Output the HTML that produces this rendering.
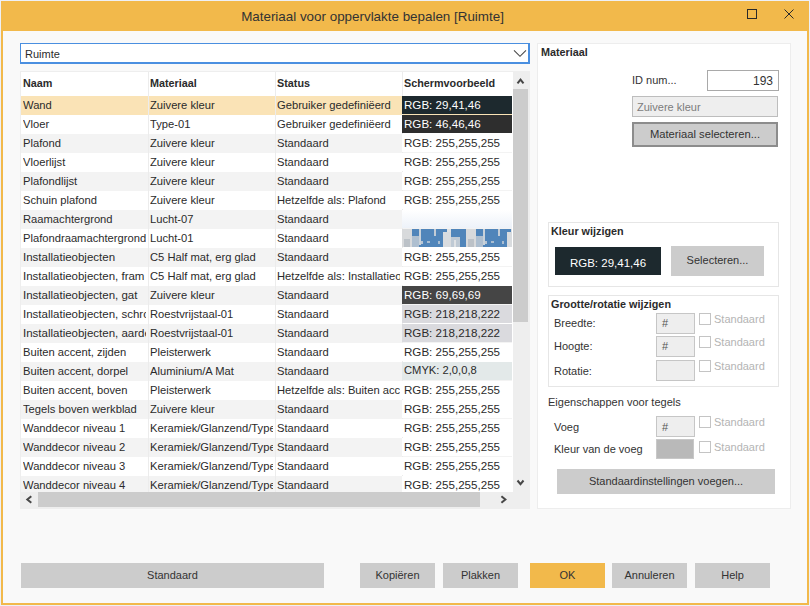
<!DOCTYPE html>
<html><head><meta charset="utf-8"><title>Materiaal voor oppervlakte bepalen</title>
<style>
*{margin:0;padding:0;box-sizing:border-box}
html,body{width:810px;height:606px;overflow:hidden;background:#eef0f6;font-family:"Liberation Sans",sans-serif;color:#2b2b2b}
.a{position:absolute}
.t{position:absolute;white-space:nowrap;overflow:hidden}
#win{position:absolute;left:1px;top:1px;width:808px;height:604px;background:#f2b94b}
#content{position:absolute;left:3px;top:31px;width:804px;height:572px;background:#f9f9f9}
.btn{position:absolute;background:#cccccc;font-size:11px;text-align:center;color:#333}
.cell{position:absolute;white-space:nowrap;overflow:hidden;font-size:11.2px;line-height:19px}
.sw{font-size:11.6px;z-index:2}
svg.a,.z2{z-index:2}
.hdr{position:absolute;white-space:nowrap;overflow:hidden;font-size:10.8px;font-weight:bold;line-height:24px}
.lbl{position:absolute;white-space:nowrap;font-size:11px;color:#333}
.chk{position:absolute;width:12px;height:12px;border:1px solid #c4c4c4;background:#fff}
.std{position:absolute;white-space:nowrap;font-size:11px;color:#b4b4b4}
.inp{position:absolute;background:#eeeeee;border:1px solid #c6c6c6;font-size:11px;color:#555}
</style></head>
<body>
<div id="win"></div>
<div class="t" style="left:1px;top:7px;width:743px;text-align:center;font-size:13.4px;line-height:20px;color:#333">Materiaal voor oppervlakte bepalen [Ruimte]</div>
<svg class="a" style="left:740px;top:2px" width="68" height="26" viewBox="740 2 68 26"><rect x="747.5" y="9.5" width="9" height="9" fill="none" stroke="#2a2a2a" stroke-width="1"/><path d="M784.5 9.5 L793.5 18.5 M793.5 9.5 L784.5 18.5" stroke="#2a2a2a" stroke-width="1" fill="none"/></svg>
<div id="content"></div>
<div class="a" style="left:20px;top:43px;width:510px;height:21px;background:#fff;border-style:solid;border-color:#4a8fe0;border-width:1px 2px 2px 1px"></div>
<div class="t" style="left:25px;top:44px;font-size:11px;line-height:21px;color:#2b2b2b">Ruimte</div>
<svg class="a" style="left:510px;top:44px" width="20" height="18" viewBox="510 44 20 18"><path d="M514 50.3 L520 56.3 L526 50.3" stroke="#4a4a4a" stroke-width="1.1" fill="none"/></svg>
<div class="a" style="left:20px;top:71px;width:510px;height:438px;background:#eeeeee"></div>
<div class="a" style="left:21px;top:72px;width:492px;height:420px;background:#ffffff;overflow:hidden">
<div class="hdr" style="left:2px;top:-1px;width:124px">Naam</div>
<div class="hdr" style="left:129px;top:-1px;width:124px">Materiaal</div>
<div class="hdr" style="left:256px;top:-1px;width:124px">Status</div>
<div class="hdr" style="left:383px;top:-1px;width:108px">Schermvoorbeeld</div>
<div class="a" style="left:0;top:24px;width:491px;height:19px;background:#fae3b6"></div>
<div class="cell" style="left:2px;top:24px;width:123px">Wand</div>
<div class="cell" style="left:129px;top:24px;width:123px">Zuivere kleur</div>
<div class="cell" style="left:256px;top:24px;width:123px">Gebruiker gedefiniëerd</div>
<div class="cell sw" style="left:381px;top:24px;width:110px;height:18px;line-height:17px;background:#1d292e;color:#fff;padding-left:2px">RGB: 29,41,46</div>
<div class="a" style="left:0;top:43px;width:491px;height:19px;background:#ffffff"></div>
<div class="cell" style="left:2px;top:43px;width:123px">Vloer</div>
<div class="cell" style="left:129px;top:43px;width:123px">Type-01</div>
<div class="cell" style="left:256px;top:43px;width:123px">Gebruiker gedefiniëerd</div>
<div class="cell sw" style="left:381px;top:43px;width:110px;height:18px;line-height:17px;background:#2e2e2e;color:#fff;padding-left:2px">RGB: 46,46,46</div>
<div class="a" style="left:0;top:62px;width:491px;height:19px;background:#f3f3f3"></div>
<div class="cell" style="left:2px;top:62px;width:123px">Plafond</div>
<div class="cell" style="left:129px;top:62px;width:123px">Zuivere kleur</div>
<div class="cell" style="left:256px;top:62px;width:123px">Standaard</div>
<div class="cell sw" style="left:381px;top:62px;width:110px;height:18px;line-height:17px;background:#ffffff;color:#2b2b2b;padding-left:2px;">RGB: 255,255,255</div>
<div class="a" style="left:0;top:81px;width:491px;height:19px;background:#ffffff"></div>
<div class="cell" style="left:2px;top:81px;width:123px">Vloerlijst</div>
<div class="cell" style="left:129px;top:81px;width:123px">Zuivere kleur</div>
<div class="cell" style="left:256px;top:81px;width:123px">Standaard</div>
<div class="cell sw" style="left:381px;top:81px;width:110px;height:18px;line-height:17px;background:#ffffff;color:#2b2b2b;padding-left:2px;">RGB: 255,255,255</div>
<div class="a" style="left:0;top:100px;width:491px;height:19px;background:#f3f3f3"></div>
<div class="cell" style="left:2px;top:100px;width:123px">Plafondlijst</div>
<div class="cell" style="left:129px;top:100px;width:123px">Zuivere kleur</div>
<div class="cell" style="left:256px;top:100px;width:123px">Standaard</div>
<div class="cell sw" style="left:381px;top:100px;width:110px;height:18px;line-height:17px;background:#ffffff;color:#2b2b2b;padding-left:2px;">RGB: 255,255,255</div>
<div class="a" style="left:0;top:119px;width:491px;height:19px;background:#ffffff"></div>
<div class="cell" style="left:2px;top:119px;width:123px">Schuin plafond</div>
<div class="cell" style="left:129px;top:119px;width:123px">Zuivere kleur</div>
<div class="cell" style="left:256px;top:119px;width:123px">Hetzelfde als: Plafond</div>
<div class="cell sw" style="left:381px;top:119px;width:110px;height:18px;line-height:17px;background:#ffffff;color:#2b2b2b;padding-left:2px;">RGB: 255,255,255</div>
<div class="a" style="left:0;top:138px;width:491px;height:19px;background:#f3f3f3"></div>
<div class="cell" style="left:2px;top:138px;width:123px">Raamachtergrond</div>
<div class="cell" style="left:129px;top:138px;width:123px">Lucht-07</div>
<div class="cell" style="left:256px;top:138px;width:123px">Standaard</div>
<div class="a z2" style="left:381px;top:138px;width:110px;height:18px;background:linear-gradient(#ffffff,#edf2f9)"></div>
<div class="a" style="left:0;top:157px;width:491px;height:19px;background:#ffffff"></div>
<div class="cell" style="left:2px;top:157px;width:123px">Plafondraamachtergrond</div>
<div class="cell" style="left:129px;top:157px;width:123px">Lucht-01</div>
<div class="cell" style="left:256px;top:157px;width:123px">Standaard</div>
<svg class="a" style="left:381px;top:157px" width="110" height="18"><defs><filter id="bl" x="-10%" y="-10%" width="120%" height="120%"><feGaussianBlur stdDeviation="0.7"/></filter><pattern id="sky" width="64" height="18" patternUnits="userSpaceOnUse"><g><rect width="64" height="18" fill="#5085ba"/><rect x="0" y="0" width="10" height="18" fill="#d8dadc"/><rect x="2" y="10" width="6" height="8" fill="#bcc2c8"/><rect x="10" y="7" width="7" height="11" fill="#aebfd0"/><rect x="17" y="0" width="2" height="16" fill="#c9d2da"/><rect x="19" y="12" width="2" height="3" fill="#b7c6d5"/><rect x="25" y="12" width="3" height="2" fill="#a9bdd1"/><rect x="32" y="0" width="2" height="7" fill="#c3ccd6"/><rect x="36" y="12" width="2" height="3" fill="#a9bdd1"/><rect x="41" y="3" width="8" height="15" fill="#d9dcdf"/><rect x="45" y="0" width="4" height="3" fill="#dfe1e3"/><rect x="49" y="8" width="9" height="10" fill="#bfcad5"/><rect x="52" y="11" width="2" height="7" fill="#dfe2e5"/></g></pattern></defs><rect width="110" height="18" fill="url(#sky)"/></svg>
<div class="a" style="left:0;top:176px;width:491px;height:19px;background:#f3f3f3"></div>
<div class="cell" style="left:2px;top:176px;width:123px;font-size:11.5px">Installatieobjecten</div>
<div class="cell" style="left:129px;top:176px;width:123px">C5 Half mat, erg glad</div>
<div class="cell" style="left:256px;top:176px;width:123px">Standaard</div>
<div class="cell sw" style="left:381px;top:176px;width:110px;height:18px;line-height:17px;background:#ffffff;color:#2b2b2b;padding-left:2px;">RGB: 255,255,255</div>
<div class="a" style="left:0;top:195px;width:491px;height:19px;background:#ffffff"></div>
<div class="cell" style="left:2px;top:195px;width:123px;font-size:11.5px">Installatieobjecten, fram</div>
<div class="cell" style="left:129px;top:195px;width:123px">C5 Half mat, erg glad</div>
<div class="cell" style="left:256px;top:195px;width:123px">Hetzelfde als: Installatieobjecten</div>
<div class="cell sw" style="left:381px;top:195px;width:110px;height:18px;line-height:17px;background:#ffffff;color:#2b2b2b;padding-left:2px;">RGB: 255,255,255</div>
<div class="a" style="left:0;top:214px;width:491px;height:19px;background:#f3f3f3"></div>
<div class="cell" style="left:2px;top:214px;width:123px;font-size:11.5px">Installatieobjecten, gat</div>
<div class="cell" style="left:129px;top:214px;width:123px">Zuivere kleur</div>
<div class="cell" style="left:256px;top:214px;width:123px">Standaard</div>
<div class="cell sw" style="left:381px;top:214px;width:110px;height:18px;line-height:17px;background:#454545;color:#fff;padding-left:2px">RGB: 69,69,69</div>
<div class="a" style="left:0;top:233px;width:491px;height:19px;background:#ffffff"></div>
<div class="cell" style="left:2px;top:233px;width:123px;font-size:11.5px">Installatieobjecten, schroeven</div>
<div class="cell" style="left:129px;top:233px;width:123px">Roestvrijstaal-01</div>
<div class="cell" style="left:256px;top:233px;width:123px">Standaard</div>
<div class="cell sw" style="left:381px;top:233px;width:110px;height:18px;line-height:17px;background:#dadade;color:#2b2b2b;padding-left:2px;">RGB: 218,218,222</div>
<div class="a" style="left:0;top:252px;width:491px;height:19px;background:#f3f3f3"></div>
<div class="cell" style="left:2px;top:252px;width:123px;font-size:11.5px">Installatieobjecten, aarde</div>
<div class="cell" style="left:129px;top:252px;width:123px">Roestvrijstaal-01</div>
<div class="cell" style="left:256px;top:252px;width:123px">Standaard</div>
<div class="cell sw" style="left:381px;top:252px;width:110px;height:18px;line-height:17px;background:#dadade;color:#2b2b2b;padding-left:2px;">RGB: 218,218,222</div>
<div class="a" style="left:0;top:271px;width:491px;height:19px;background:#ffffff"></div>
<div class="cell" style="left:2px;top:271px;width:123px">Buiten accent, zijden</div>
<div class="cell" style="left:129px;top:271px;width:123px">Pleisterwerk</div>
<div class="cell" style="left:256px;top:271px;width:123px">Standaard</div>
<div class="cell sw" style="left:381px;top:271px;width:110px;height:18px;line-height:17px;background:#ffffff;color:#2b2b2b;padding-left:2px;">RGB: 255,255,255</div>
<div class="a" style="left:0;top:290px;width:491px;height:19px;background:#f3f3f3"></div>
<div class="cell" style="left:2px;top:290px;width:123px">Buiten accent, dorpel</div>
<div class="cell" style="left:129px;top:290px;width:123px">Aluminium/A Mat</div>
<div class="cell" style="left:256px;top:290px;width:123px">Standaard</div>
<div class="cell sw" style="left:381px;top:290px;width:110px;height:18px;line-height:17px;background:#e3e9e9;color:#2b2b2b;padding-left:2px;font-size:11.2px">CMYK: 2,0,0,8</div>
<div class="a" style="left:0;top:309px;width:491px;height:19px;background:#ffffff"></div>
<div class="cell" style="left:2px;top:309px;width:123px">Buiten accent, boven</div>
<div class="cell" style="left:129px;top:309px;width:123px">Pleisterwerk</div>
<div class="cell" style="left:256px;top:309px;width:123px">Hetzelfde als: Buiten accent, zijden</div>
<div class="cell sw" style="left:381px;top:309px;width:110px;height:18px;line-height:17px;background:#ffffff;color:#2b2b2b;padding-left:2px;">RGB: 255,255,255</div>
<div class="a" style="left:0;top:328px;width:491px;height:19px;background:#f3f3f3"></div>
<div class="cell" style="left:2px;top:328px;width:123px">Tegels boven werkblad</div>
<div class="cell" style="left:129px;top:328px;width:123px">Zuivere kleur</div>
<div class="cell" style="left:256px;top:328px;width:123px">Standaard</div>
<div class="cell sw" style="left:381px;top:328px;width:110px;height:18px;line-height:17px;background:#ffffff;color:#2b2b2b;padding-left:2px;">RGB: 255,255,255</div>
<div class="a" style="left:0;top:347px;width:491px;height:19px;background:#ffffff"></div>
<div class="cell" style="left:2px;top:347px;width:123px">Wanddecor niveau 1</div>
<div class="cell" style="left:129px;top:347px;width:123px">Keramiek/Glanzend/Type-01</div>
<div class="cell" style="left:256px;top:347px;width:123px">Standaard</div>
<div class="cell sw" style="left:381px;top:347px;width:110px;height:18px;line-height:17px;background:#ffffff;color:#2b2b2b;padding-left:2px;">RGB: 255,255,255</div>
<div class="a" style="left:0;top:366px;width:491px;height:19px;background:#f3f3f3"></div>
<div class="cell" style="left:2px;top:366px;width:123px">Wanddecor niveau 2</div>
<div class="cell" style="left:129px;top:366px;width:123px">Keramiek/Glanzend/Type-01</div>
<div class="cell" style="left:256px;top:366px;width:123px">Standaard</div>
<div class="cell sw" style="left:381px;top:366px;width:110px;height:18px;line-height:17px;background:#ffffff;color:#2b2b2b;padding-left:2px;">RGB: 255,255,255</div>
<div class="a" style="left:0;top:385px;width:491px;height:19px;background:#ffffff"></div>
<div class="cell" style="left:2px;top:385px;width:123px">Wanddecor niveau 3</div>
<div class="cell" style="left:129px;top:385px;width:123px">Keramiek/Glanzend/Type-01</div>
<div class="cell" style="left:256px;top:385px;width:123px">Standaard</div>
<div class="cell sw" style="left:381px;top:385px;width:110px;height:18px;line-height:17px;background:#ffffff;color:#2b2b2b;padding-left:2px;">RGB: 255,255,255</div>
<div class="a" style="left:0;top:404px;width:491px;height:19px;background:#f3f3f3"></div>
<div class="cell" style="left:2px;top:404px;width:123px">Wanddecor niveau 4</div>
<div class="cell" style="left:129px;top:404px;width:123px">Keramiek/Glanzend/Type-01</div>
<div class="cell" style="left:256px;top:404px;width:123px">Standaard</div>
<div class="cell sw" style="left:381px;top:404px;width:110px;height:18px;line-height:17px;background:#ffffff;color:#2b2b2b;padding-left:2px;">RGB: 255,255,255</div>
<div class="a" style="left:127px;top:0;width:1px;height:420px;background:#ececec;z-index:1"></div>
<div class="a" style="left:254px;top:0;width:1px;height:420px;background:#ececec;z-index:1"></div>
<div class="a" style="left:381px;top:0;width:1px;height:420px;background:#ececec;z-index:1"></div>
</div>
<div class="a" style="left:513px;top:89px;width:15px;height:233px;background:#cccccc"></div>
<svg class="a" style="left:513px;top:72px" width="17" height="17"><path d="M4.5 11.3 L7.5 7.6 L10.5 11.3" stroke="#474747" stroke-width="2" fill="none"/></svg>
<svg class="a" style="left:513px;top:475px" width="17" height="17"><path d="M4.5 5.5 L7.5 9.2 L10.5 5.5" stroke="#474747" stroke-width="2" fill="none"/></svg>
<div class="a" style="left:38px;top:492px;width:442px;height:15px;background:#cccccc"></div>
<svg class="a" style="left:21px;top:492px" width="17" height="16"><path d="M10.3 4.2 L6.3 7.5 L10.3 10.8" stroke="#474747" stroke-width="2" fill="none"/></svg>
<svg class="a" style="left:496px;top:492px" width="17" height="16"><path d="M5.4 4.2 L9.4 7.5 L5.4 10.8" stroke="#474747" stroke-width="2" fill="none"/></svg>
<div class="a" style="left:537px;top:43px;width:254px;height:466px;background:#fff;border:1px solid #ededed"></div>
<div class="t" style="left:541px;top:44px;font-size:10.8px;font-weight:bold;line-height:16px">Materiaal</div>
<div class="lbl" style="left:632px;top:72px;line-height:16px">ID num...</div>
<div class="a" style="left:707px;top:70px;width:72px;height:21px;background:#fff;border:1px solid #a9a9a9;font-size:12px;line-height:21px;text-align:right;padding-right:5px;color:#333">193</div>
<div class="a" style="left:632px;top:96px;width:146px;height:21px;background:#eeeeee;border:1px solid #bdbdbd;font-size:11px;line-height:21px;padding-left:4px;color:#7c7c7c">Zuivere kleur</div>
<div class="a" style="left:632px;top:122px;width:146px;height:25px;background:#cccccc;border:2px solid #8c8c8c;font-size:11.2px;line-height:21px;text-align:center;color:#333">Materiaal selecteren...</div>
<div class="a" style="left:548px;top:222px;width:231px;height:65px;border:1px solid #e6e6e6;background:#fff"></div>
<div class="t" style="left:551px;top:223px;font-size:10.8px;font-weight:bold;line-height:16px">Kleur wijzigen</div>
<div class="a" style="left:555px;top:247px;width:106px;height:28px;background:#1d292e;color:#fff;font-size:11.5px;line-height:32px;text-align:center">RGB: 29,41,46</div>
<div class="btn" style="left:671px;top:246px;width:93px;height:30px;line-height:28px">Selecteren...</div>
<div class="a" style="left:548px;top:295px;width:231px;height:92px;border:1px solid #e6e6e6;background:#fff"></div>
<div class="t" style="left:551px;top:296px;font-size:10.8px;font-weight:bold;line-height:16px">Grootte/rotatie wijzigen</div>
<div class="lbl" style="left:554px;top:315px;line-height:16px">Breedte:</div>
<div class="inp" style="left:656px;top:313px;width:39px;height:21px;line-height:19px;padding-left:5px">#</div>
<div class="chk" style="left:699px;top:313px"></div>
<div class="std" style="left:714px;top:311px;line-height:16px">Standaard</div>
<div class="lbl" style="left:554px;top:338px;line-height:16px">Hoogte:</div>
<div class="inp" style="left:656px;top:336px;width:39px;height:21px;line-height:19px;padding-left:5px">#</div>
<div class="chk" style="left:699px;top:336px"></div>
<div class="std" style="left:714px;top:334px;line-height:16px">Standaard</div>
<div class="lbl" style="left:554px;top:363px;line-height:16px">Rotatie:</div>
<div class="inp" style="left:656px;top:360px;width:39px;height:21px;line-height:19px;padding-left:5px"></div>
<div class="chk" style="left:699px;top:360px"></div>
<div class="std" style="left:714px;top:358px;line-height:16px">Standaard</div>
<div class="lbl" style="left:548px;top:394px;line-height:16px">Eigenschappen voor tegels</div>
<div class="lbl" style="left:554px;top:419px;line-height:16px">Voeg</div>
<div class="inp" style="left:656px;top:416px;width:39px;height:21px;line-height:21px;padding-left:5px">#</div>
<div class="chk" style="left:699px;top:416px"></div>
<div class="std" style="left:714px;top:414px;line-height:16px">Standaard</div>
<div class="lbl" style="left:554px;top:441px;line-height:16px">Kleur van de voeg</div>
<div class="a" style="left:656px;top:439px;width:38px;height:20px;background:#b9b9b9;border:1px solid #c8c8c8"></div>
<div class="chk" style="left:699px;top:441px"></div>
<div class="std" style="left:714px;top:439px;line-height:16px">Standaard</div>
<div class="btn" style="left:557px;top:469px;width:218px;height:25px;line-height:25px">Standaardinstellingen voegen...</div>
<div class="btn" style="left:21px;top:563px;width:303px;height:25px;line-height:25px;background:#cccccc">Standaard</div>
<div class="btn" style="left:360px;top:563px;width:75px;height:25px;line-height:25px;background:#cccccc">Kopiëren</div>
<div class="btn" style="left:443px;top:563px;width:75px;height:25px;line-height:25px;background:#cccccc">Plakken</div>
<div class="btn" style="left:530px;top:563px;width:75px;height:25px;line-height:25px;background:#f2b94b">OK</div>
<div class="btn" style="left:612px;top:563px;width:75px;height:25px;line-height:25px;background:#cccccc">Annuleren</div>
<div class="btn" style="left:695px;top:563px;width:75px;height:25px;line-height:25px;background:#cccccc">Help</div>
</body></html>
